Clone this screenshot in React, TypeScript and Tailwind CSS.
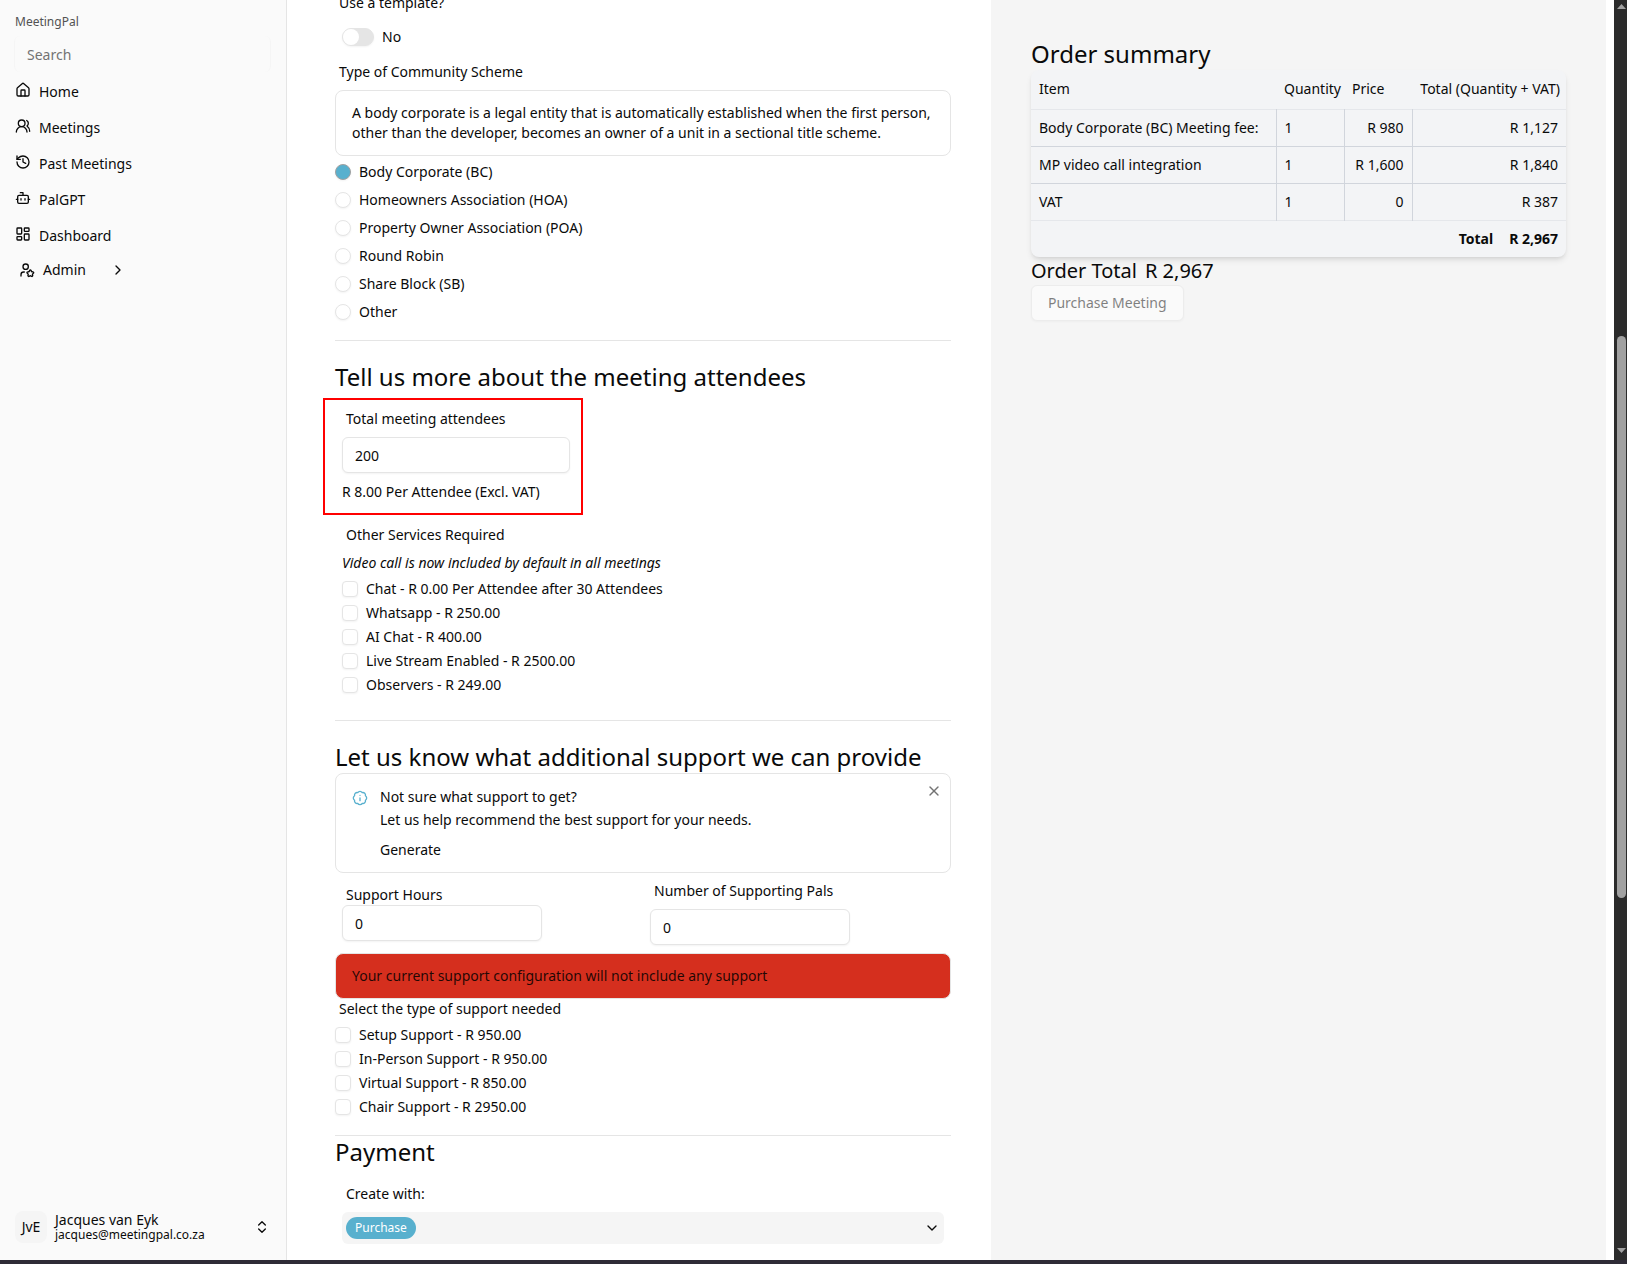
import {
  BadgeInfo,
  Bot,
  ChevronDown,
  ChevronRight,
  ChevronsUpDown,
  History,
  House,
  LayoutDashboard,
  UserStar,
  UsersRound,
  X
} from 'lucide-react';

const navItems = [
  { label: 'Home', icon: House },
  { label: 'Meetings', icon: UsersRound },
  { label: 'Past Meetings', icon: History },
  { label: 'PalGPT', icon: Bot },
  { label: 'Dashboard', icon: LayoutDashboard }
];

const schemes = [
  'Body Corporate (BC)',
  'Homeowners Association (HOA)',
  'Property Owner Association (POA)',
  'Round Robin',
  'Share Block (SB)',
  'Other'
];

const services = [
  'Chat - R 0.00 Per Attendee after 30 Attendees',
  'Whatsapp - R 250.00',
  'AI Chat - R 400.00',
  'Live Stream Enabled - R 2500.00',
  'Observers - R 249.00'
];

const supportTypes = [
  'Setup Support - R 950.00',
  'In-Person Support - R 950.00',
  'Virtual Support - R 850.00',
  'Chair Support - R 2950.00'
];

const orderLines = [
  { item: 'Body Corporate (BC) Meeting fee:', quantity: '1', price: 'R 980', total: 'R 1,127' },
  { item: 'MP video call integration', quantity: '1', price: 'R 1,600', total: 'R 1,840' },
  { item: 'VAT', quantity: '1', price: '0', total: 'R 387' }
];

const inputClass = 'block h-9 rounded-md border border-neutral-200 bg-white px-3 shadow-xs';

function CheckRow({ label }: { label: string }) {
  return (
    <label className="flex h-6 items-center gap-2">
      <input
        type="checkbox"
        className="size-4 shrink-0 appearance-none rounded-sm border border-neutral-200 bg-white shadow-xs checked:bg-[#58b0ce]"
      />
      {label}
    </label>
  );
}

function Sidebar() {
  return (
    <aside className="flex w-[287px] shrink-0 flex-col border-r border-neutral-200 bg-neutral-50 px-[14px] pt-[14px] pb-[17px]">
      <p className="px-px text-xs text-neutral-600">MeetingPal</p>
      <input
        type="search"
        aria-label="Search"
        placeholder="Search"
        className="mt-[6px] mr-px h-9 rounded-md border-x border-neutral-100 px-3 placeholder:text-neutral-500"
      />
      <nav className="pt-[2px]">
        {navItems.map(({ label, icon: Icon }) => (
          <a key={label} href="#" className="flex h-9 items-center gap-2 px-px">
            <Icon size={16} className="mb-1" />
            {label}
          </a>
        ))}
        <button type="button" className="flex h-8 items-center px-[5px]">
          <UserStar size={16} />
          <span className="ml-2">Admin</span>
          <ChevronRight size={16} className="ml-6" />
        </button>
      </nav>
      <button type="button" className="mt-auto flex items-center gap-2 px-px text-left">
        <span className="flex size-8 items-center justify-center rounded-lg bg-neutral-100">JvE</span>
        <span className="flex-1">
          <span className="block leading-4">Jacques van Eyk</span>
          <span className="block text-xs leading-[14px]">jacques@meetingpal.co.za</span>
        </span>
        <ChevronsUpDown size={16} className="mr-px" />
      </button>
    </aside>
  );
}

function MeetingForm() {
  return (
    <form className="min-w-0 overflow-hidden pr-10 pl-12">
      <div className="-mt-[7px] px-1">
        <label htmlFor="template" className="block">
          Use a template?
        </label>
        <div className="mt-3 ml-[3px] flex h-6 items-center gap-2">
          <button
            id="template"
            type="button"
            role="switch"
            aria-checked="false"
            className="flex h-[18px] w-8 items-center rounded-full border border-neutral-200 bg-neutral-200 shadow-xs"
          >
            <span className="size-4 rounded-full bg-white" />
          </button>
          <span>No</span>
        </div>
      </div>

      <fieldset className="mt-[13px] pb-[14px]">
        <legend className="mb-2 px-1">Type of Community Scheme</legend>
        <div className="mb-[2px] rounded-lg border border-neutral-200 px-4 py-3">
          A body corporate is a legal entity that is automatically established when the first person, other than the
          developer, becomes an owner of a unit in a sectional title scheme.
        </div>
        {schemes.map((scheme, index) => (
          <label key={scheme} className="flex h-7 items-center gap-2">
            <input
              type="radio"
              name="scheme"
              defaultChecked={index === 0}
              className="size-4 shrink-0 appearance-none rounded-full border border-neutral-200 bg-white shadow-xs checked:border-neutral-400 checked:bg-[#58b0ce]"
            />
            {scheme}
          </label>
        ))}
      </fieldset>

      <section className="border-t border-neutral-200 pt-5 pb-[23px]">
        <h2 className="text-2xl">Tell us more about the meeting attendees</h2>
        <div className="mt-[5px] -ml-3 w-[260px] border-2 border-[#ff0000] pt-[9px] pr-[11px] pb-[11px] pl-[17px]">
          <label htmlFor="attendees" className="block px-1">
            Total meeting attendees
          </label>
          <input id="attendees" defaultValue="200" className={`${inputClass} mt-2 w-[228px]`} />
          <p className="mt-[9px]">R 8.00 Per Attendee (Excl. VAT)</p>
        </div>
        <fieldset className="mt-[10px] pl-[7px]">
          <legend className="mb-2 px-1">Other Services Required</legend>
          <p className="mb-1 italic">Video call is now included by default in all meetings</p>
          {services.map((service) => (
            <CheckRow key={service} label={service} />
          ))}
        </fieldset>
      </section>

      <section className="border-t border-neutral-200 pt-5 pb-4">
        <h2 className="text-2xl">Let us know what additional support we can provide</h2>
        <div className="flex rounded-lg border border-neutral-200 pt-[13px] pr-2 pb-3 pl-4">
          <BadgeInfo size={16} className="mt-[3px] mr-3 text-[#58b0ce]" />
          <div className="flex-1">
            <p>Not sure what support to get?</p>
            <p className="mt-[3px]">Let us help recommend the best support for your needs.</p>
            <button type="button" className="mt-[10px] block">
              Generate
            </button>
          </div>
          <button type="button" aria-label="Close" className="-mt-1 self-start text-neutral-500">
            <X size={16} />
          </button>
        </div>
        <div className="grid grid-cols-2 px-[7px] py-2">
          <div className="pt-1">
            <label htmlFor="hours" className="block px-1">
              Support Hours
            </label>
            <input id="hours" defaultValue="0" className={`${inputClass} w-[200px]`} />
          </div>
          <div className="pl-[7px]">
            <label htmlFor="pals" className="block px-1">
              Number of Supporting Pals
            </label>
            <input id="pals" defaultValue="0" className={`${inputClass} mt-2 w-[200px]`} />
          </div>
        </div>
        <p role="alert" className="rounded-lg border border-neutral-200 bg-[#d52f1e] px-4 py-3 text-black/85">
          Your current support configuration will not include any support
        </p>
        <fieldset>
          <legend className="mb-1 px-1">Select the type of support needed</legend>
          {supportTypes.map((support) => (
            <CheckRow key={support} label={support} />
          ))}
        </fieldset>
      </section>

      <section className="border-t border-neutral-200 pb-4">
        <h2 className="text-2xl">Payment</h2>
        <div className="mt-4 px-[7px]">
          <label htmlFor="create-with" className="block px-1">
            Create with:
          </label>
          <div className="mt-2 flex h-8 items-center justify-between rounded-md bg-neutral-100 px-1">
            <select
              id="create-with"
              className="h-[22px] appearance-none rounded-full bg-[#58b0ce] px-[9px] text-xs text-white"
            >
              <option>Purchase</option>
            </select>
            <ChevronDown size={16} />
          </div>
        </div>
      </section>
    </form>
  );
}

function OrderSummary() {
  return (
    <section className="min-w-0 bg-neutral-100 px-10 pt-[38px]">
      <h2 className="text-2xl">Order summary</h2>
      <table className="w-full overflow-hidden rounded-lg bg-gray-100 shadow-md">
        <thead>
          <tr className="h-[39px] border-b border-gray-200">
            <th className="px-2 text-left font-normal">Item</th>
            <th className="w-[68px] pl-2 text-left font-normal">Quantity</th>
            <th className="w-[68px] px-2 text-left font-normal">Price</th>
            <th className="w-[154px] pr-[6px] text-right font-normal whitespace-nowrap">Total (Quantity + VAT)</th>
          </tr>
        </thead>
        <tbody>
          {orderLines.map((line) => (
            <tr key={line.item} className="h-[37px] border-b border-gray-300 last:border-gray-200">
              <td className="border-r border-gray-300 px-2">{line.item}</td>
              <td className="border-r border-gray-300 px-2">{line.quantity}</td>
              <td className="border-r border-gray-300 px-2 text-right whitespace-nowrap">{line.price}</td>
              <td className="px-2 text-right">{line.total}</td>
            </tr>
          ))}
        </tbody>
        <tfoot>
          <tr className="h-[37px] font-bold">
            <td colSpan={4} className="px-2 text-right">
              <span className="mr-4">Total</span>
              <span>R 2,967</span>
            </td>
          </tr>
        </tfoot>
      </table>
      <p className="flex gap-2 text-xl">
        <span>Order Total</span>
        <span>R 2,967</span>
      </p>
      <button
        type="button"
        disabled
        className="h-9 rounded-md border border-neutral-200 bg-white px-4 opacity-50 shadow-xs"
      >
        Purchase Meeting
      </button>
    </section>
  );
}

function Scrollbar() {
  return (
    <div aria-hidden="true" className="flex w-[13px] shrink-0 flex-col items-end bg-[#2b2b2b] pt-1 pr-px pb-[7px]">
      <svg viewBox="0 0 9 5" className="w-[9px] fill-neutral-400">
        <path d="M0 5 4.5 0 9 5z" />
      </svg>
      <div className="flex-[327]" />
      <div className="w-[9px] flex-[562] rounded-full bg-neutral-400" />
      <div className="flex-[350]" />
      <svg viewBox="0 0 9 5" className="w-[9px] fill-neutral-400">
        <path d="M0 0h9L4.5 5z" />
      </svg>
    </div>
  );
}

export default function App() {
  return (
    <div className="flex min-h-screen border-b-4 border-[#2e2b36] bg-white font-['Noto_Sans',sans-serif] text-sm text-neutral-950">
      <Sidebar />
      <main className="grid min-w-0 flex-1 grid-cols-[704fr_615fr] pr-2">
        <MeetingForm />
        <OrderSummary />
      </main>
      <Scrollbar />
    </div>
  );
}
